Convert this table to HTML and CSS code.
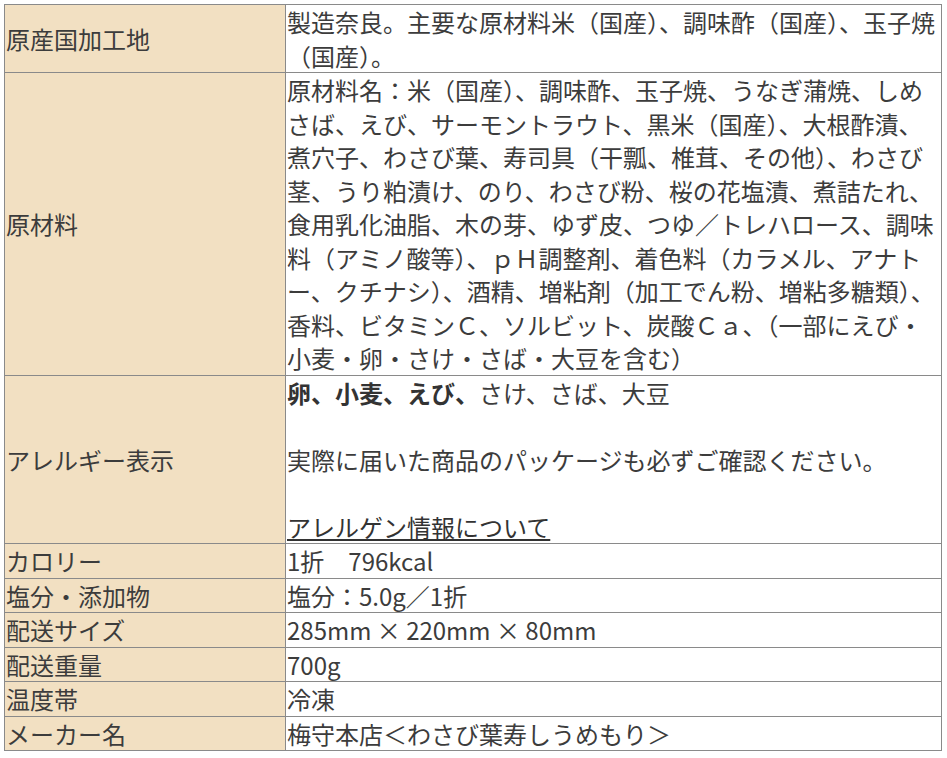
FILE: index.html
```html
<!DOCTYPE html>
<html lang="ja">
<head>
<meta charset="utf-8">
<title>商品情報</title>
<link rel="stylesheet" href="styles.css">
</head>
<body>
<table class="spec">
  <tbody>
    <tr>
      <th class="label">原産国加工地</th>
      <td class="value">製造奈良。主要な原材料米（国産）、調味酢（国産）、玉子焼（国産）。</td>
    </tr>
    <tr>
      <th class="label">原材料</th>
      <td class="value">原材料名：米（国産）、調味酢、玉子焼、うなぎ蒲焼、しめさば、えび、サーモントラウト、黒米（国産）、大根酢漬、煮穴子、わさび葉、寿司具（干瓢、椎茸、その他）、わさび茎、うり粕漬け、のり、わさび粉、桜の花塩漬、煮詰たれ、食用乳化油脂、木の芽、ゆず皮、つゆ／トレハロース、調味料（アミノ酸等）、ｐＨ調整剤、着色料（カラメル、アナトー、クチナシ）、酒精、増粘剤（加工でん粉、増粘多糖類）、香料、ビタミンＣ、ソルビット、炭酸Ｃａ、（一部にえび・小麦・卵・さけ・さば・大豆を含む）</td>
    </tr>
    <tr>
      <th class="label">アレルギー表示</th>
      <td class="value"><strong class="strong">卵、小麦、えび、</strong>さけ、さば、大豆<br><br>実際に届いた商品のパッケージも必ずご確認ください。<br><br><a class="link" href="#">アレルゲン情報について</a></td>
    </tr>
    <tr>
      <th class="label">カロリー</th>
      <td class="value">1折　796kcal</td>
    </tr>
    <tr>
      <th class="label">塩分・添加物</th>
      <td class="value">塩分：5.0g／1折</td>
    </tr>
    <tr>
      <th class="label">配送サイズ</th>
      <td class="value">285mm × 220mm × 80mm</td>
    </tr>
    <tr>
      <th class="label">配送重量</th>
      <td class="value">700g</td>
    </tr>
    <tr>
      <th class="label">温度帯</th>
      <td class="value">冷凍</td>
    </tr>
    <tr>
      <th class="label">メーカー名</th>
      <td class="value">梅守本店＜わさび葉寿しうめもり＞</td>
    </tr>
  </tbody>
</table>
</body>
</html>
```
FILE: styles.css
```css
html, body {
  background: #ffffff;
}
body {
  margin: 4px;
  font-family: "Noto Sans CJK JP", "Noto Sans", sans-serif;
  font-size: 24px;
  line-height: 33.5px;
  color: #3c3c3c;
}
.spec {
  border-collapse: collapse;
  width: 938px;
  border: 1px solid #8a8a8a;
}
.label,
.value {
  border: 1px solid #8a8a8a;
  padding: 0 0 0 1px;
  vertical-align: middle;
  text-align: left;
}
.label {
  width: 279px;
  background: #f2e0c2;
  font-weight: normal;
}
.value {
  background: #ffffff;
}
.strong {
  font-weight: bold;
  color: #333333;
}
.link {
  color: #333333;
  text-decoration: underline;
  text-decoration-thickness: 2px;
  text-underline-offset: 2px;
}
```
